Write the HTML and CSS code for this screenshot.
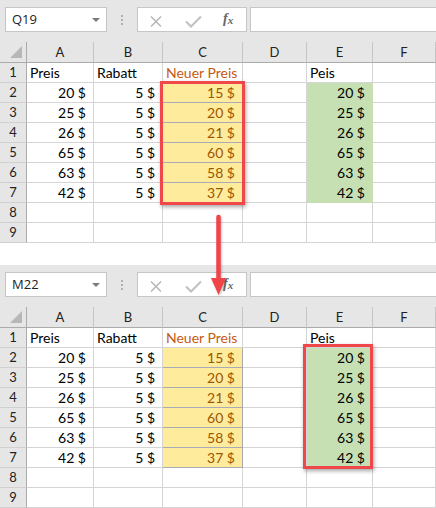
FILE: index.html
```html
<!DOCTYPE html>
<html lang="de">
<head>
<meta charset="utf-8">
<title>Excel</title>
<link rel="stylesheet" href="styles.css">
</head>
<body>
<div class="page">
  <section class="sheet">
    <div class="fbar">
      <div class="namebox"><span>Q19</span><span class="dd"></span></div>
      <div class="dots"><i></i><i></i><i></i></div>
      <div class="fbtns">
        <svg class="ico" width="110" height="23" viewBox="0 0 110 23"><path d="M13 8.5 L23 18.5 M23 8.5 L13 18.5" stroke="#b8b8b8" stroke-width="1.6" fill="none"/><path d="M48 13.5 L53 18.5 L63 8.5" stroke="#c0c0c0" stroke-width="2" fill="none"/></svg>
        <span class="fx">f<sub>x</sub></span>
      </div>
      <div class="finput"></div>
    </div>
    <div class="grid">
      <div class="corner"><span class="tri"></span></div><div class="ch">A</div><div class="ch">B</div><div class="ch">C</div><div class="ch">D</div><div class="ch">E</div><div class="ch">F</div>
      <div class="rh">1</div><div class="c">Preis</div><div class="c">Rabatt</div><div class="c o">Neuer Preis</div><div class="c"></div><div class="c">Peis</div><div class="c"></div>
      <div class="rh">2</div><div class="c n">20 $</div><div class="c n">5 $</div><div class="c n y">15 $</div><div class="c"></div><div class="c n g">20 $</div><div class="c"></div>
      <div class="rh">3</div><div class="c n">25 $</div><div class="c n">5 $</div><div class="c n y">20 $</div><div class="c"></div><div class="c n g">25 $</div><div class="c"></div>
      <div class="rh">4</div><div class="c n">26 $</div><div class="c n">5 $</div><div class="c n y">21 $</div><div class="c"></div><div class="c n g">26 $</div><div class="c"></div>
      <div class="rh">5</div><div class="c n">65 $</div><div class="c n">5 $</div><div class="c n y">60 $</div><div class="c"></div><div class="c n g">65 $</div><div class="c"></div>
      <div class="rh">6</div><div class="c n">63 $</div><div class="c n">5 $</div><div class="c n y">58 $</div><div class="c"></div><div class="c n g">63 $</div><div class="c"></div>
      <div class="rh">7</div><div class="c n">42 $</div><div class="c n">5 $</div><div class="c n y">37 $</div><div class="c"></div><div class="c n g">42 $</div><div class="c"></div>
      <div class="rh">8</div><div class="c"></div><div class="c"></div><div class="c"></div><div class="c"></div><div class="c"></div><div class="c"></div>
      <div class="rh">9</div><div class="c"></div><div class="c"></div><div class="c"></div><div class="c"></div><div class="c"></div><div class="c"></div>
    </div>
    <div class="hl hl-c"></div>
  </section>

  <section class="sheet">
    <div class="fbar">
      <div class="namebox"><span>M22</span><span class="dd"></span></div>
      <div class="dots"><i></i><i></i><i></i></div>
      <div class="fbtns">
        <svg class="ico" width="110" height="23" viewBox="0 0 110 23"><path d="M13 8.5 L23 18.5 M23 8.5 L13 18.5" stroke="#b8b8b8" stroke-width="1.6" fill="none"/><path d="M48 13.5 L53 18.5 L63 8.5" stroke="#c0c0c0" stroke-width="2" fill="none"/></svg>
        <span class="fx">f<sub>x</sub></span>
      </div>
      <div class="finput"></div>
    </div>
    <div class="grid">
      <div class="corner"><span class="tri"></span></div><div class="ch">A</div><div class="ch">B</div><div class="ch">C</div><div class="ch">D</div><div class="ch">E</div><div class="ch">F</div>
      <div class="rh">1</div><div class="c">Preis</div><div class="c">Rabatt</div><div class="c o">Neuer Preis</div><div class="c"></div><div class="c">Peis</div><div class="c"></div>
      <div class="rh">2</div><div class="c n">20 $</div><div class="c n">5 $</div><div class="c n y">15 $</div><div class="c"></div><div class="c n g">20 $</div><div class="c"></div>
      <div class="rh">3</div><div class="c n">25 $</div><div class="c n">5 $</div><div class="c n y">20 $</div><div class="c"></div><div class="c n g">25 $</div><div class="c"></div>
      <div class="rh">4</div><div class="c n">26 $</div><div class="c n">5 $</div><div class="c n y">21 $</div><div class="c"></div><div class="c n g">26 $</div><div class="c"></div>
      <div class="rh">5</div><div class="c n">65 $</div><div class="c n">5 $</div><div class="c n y">60 $</div><div class="c"></div><div class="c n g">65 $</div><div class="c"></div>
      <div class="rh">6</div><div class="c n">63 $</div><div class="c n">5 $</div><div class="c n y">58 $</div><div class="c"></div><div class="c n g">63 $</div><div class="c"></div>
      <div class="rh">7</div><div class="c n">42 $</div><div class="c n">5 $</div><div class="c n y">37 $</div><div class="c"></div><div class="c n g">42 $</div><div class="c"></div>
      <div class="rh">8</div><div class="c"></div><div class="c"></div><div class="c"></div><div class="c"></div><div class="c"></div><div class="c"></div>
      <div class="rh">9</div><div class="c"></div><div class="c"></div><div class="c"></div><div class="c"></div><div class="c"></div><div class="c"></div>
    </div>
    <div class="hl hl-e"></div>
  </section>

  <svg class="arrow" width="30" height="90" viewBox="0 0 30 90">
    <line x1="13.5" y1="7" x2="13.5" y2="70" stroke="#f04449" stroke-width="4.5" stroke-linecap="round"/>
    <path d="M6 68 L21 68 L13.5 85 Z" fill="#f04449"/>
  </svg>
</div>
</body>
</html>
```
FILE: styles.css
```css
* { box-sizing: border-box; }
html, body { margin: 0; padding: 0; background: #fff; }
body { width: 436px; height: 508px; overflow: hidden; }

.page {
  position: relative;
  display: flex;
  flex-direction: column;
  gap: 22px;
  width: 436px;
}

.sheet { position: relative; width: 436px; }

.fbar {
  display: flex;
  align-items: flex-start;
  height: 42px;
  padding-top: 7px;
  background: #e6e6e6;
  overflow: hidden;
}

.namebox {
  position: relative;
  margin-left: 5px;
  width: 102px;
  height: 25px;
  background: #fff;
  border: 1px solid #c6c6c6;
  font-family: "Open Sans", "Noto Sans", sans-serif;
  font-size: 13px;
  color: #222;
  line-height: 23px;
  padding-left: 6px;
}
.dd {
  position: absolute;
  right: 6px;
  top: 10px;
  width: 0; height: 0;
  border-left: 4px solid transparent;
  border-right: 4px solid transparent;
  border-top: 4px solid #7a7a7a;
}

.dots {
  display: flex;
  flex-direction: column;
  gap: 2px;
  width: 30px;
  align-items: center;
  padding-top: 8px;
  padding-right: 0;
}
.dots i {
  display: block;
  width: 2px; height: 2px;
  background: #b0b0b0;
}

.fbtns {
  position: relative;
  width: 110px;
  height: 25px;
  background: #fff;
  border: 1px solid #c6c6c6;
  display: flex;
  align-items: center;
}
.ico { position: absolute; left: 0; top: 0; }
.fx {
  position: absolute;
  left: 85px;
  top: 2px;
  font-family: "Liberation Serif", "DejaVu Serif", serif;
  font-style: italic;
  font-weight: bold;
  font-size: 14px;
  color: #666;
  line-height: 18px;
}
.fx sub { font-size: 11px; vertical-align: -1px; }

.finput {
  flex: 1;
  margin-left: 3px;
  margin-right: -3px;
  height: 25px;
  background: #fff;
  border: 1px solid #c6c6c6;
}

.grid {
  display: grid;
  grid-template-columns: 27px 67px 69px 80px 64px 66px 63px;
  grid-template-rows: 21px repeat(9, 20px);
  font-family: Lato, "Liberation Sans", sans-serif;
  font-size: 14px;
  color: #000;
}

.corner, .ch, .rh {
  background: #e6e6e6;
  color: #222;
  font-size: 13px;
}
.corner {
  position: relative;
  border-right: 1px solid #ababab;
  border-bottom: 1px solid #ababab;
}
.tri {
  position: absolute;
  left: 10px;
  top: 4px;
  width: 0; height: 0;
  border-left: 12px solid transparent;
  border-bottom: 12px solid #b7b7b7;
}
.ch {
  border-right: 1px solid #c5c5c5;
  border-bottom: 1px solid #ababab;
  text-align: center;
  line-height: 20px;
}
.rh {
  border-right: 1px solid #ababab;
  border-bottom: 1px solid #d0d0d0;
  text-align: center;
  line-height: 19px;
}

.c {
  border-right: 1px solid #d4d4d4;
  border-bottom: 1px solid #d4d4d4;
  line-height: 19px;
  padding: 0 3px;
  white-space: nowrap;
  overflow: visible;
}
.n { text-align: right; padding-right: 7px; }
.o { color: #c55a11; }
.y {
  background: #ffeb9c;
  color: #9c5700;
  border-bottom-color: #a9a9b8;
  border-right-color: #a9a9a9;
}
.g {
  background: #c6e0b4;
  border-bottom-color: #c6e0b4;
  border-right-color: #c6e0b4;
}

.hl {
  position: absolute;
  border: 3px solid #f0474b;
  box-shadow: 1px 2px 4px rgba(0,0,0,0.35);
  pointer-events: none;
}
.hl-c { left: 160px; top: 81px; width: 85px; height: 124px; }
.hl-e { left: 303px; top: 79px; width: 70px; height: 125px; }

.arrow {
  position: absolute;
  left: 205px;
  top: 210px;
  filter: drop-shadow(1px 1px 1px rgba(0,0,0,0.25));
}
```
